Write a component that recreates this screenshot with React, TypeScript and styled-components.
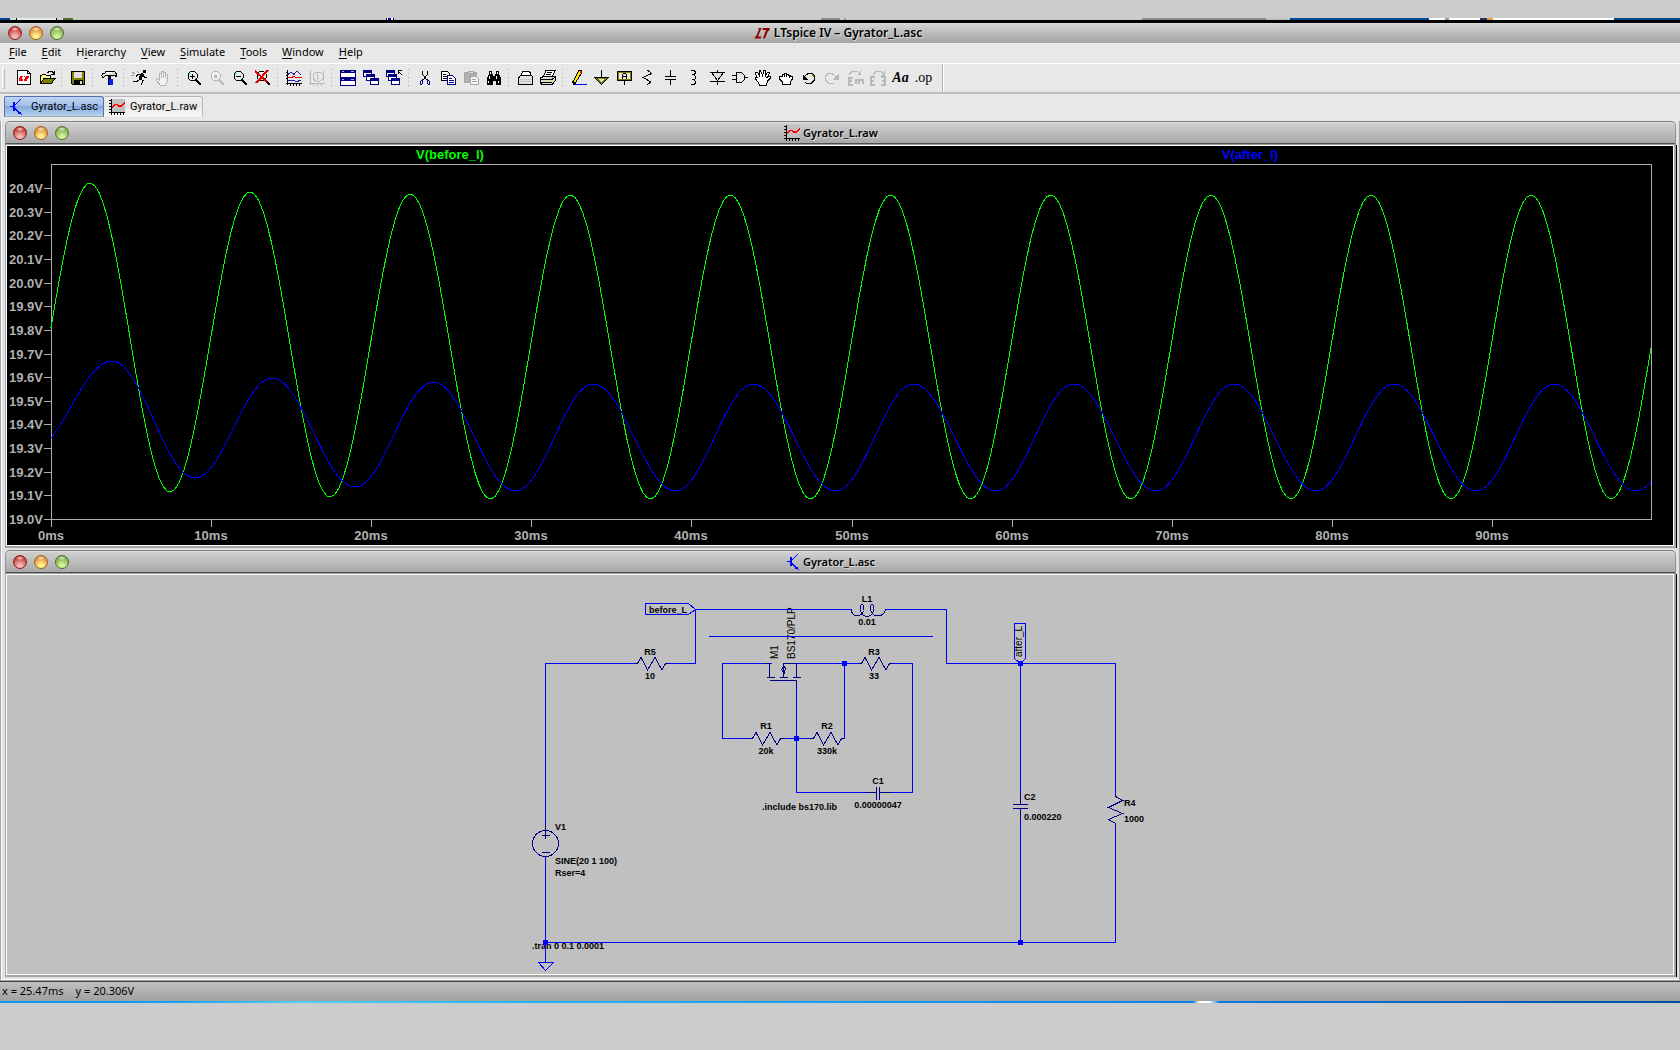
import React from "react";
import styled, { createGlobalStyle } from "styled-components";

const UI = `"Noto Sans", "Open Sans", sans-serif`;
const ARIAL = `"Liberation Sans", Arial, sans-serif`;

const GlobalStyle = createGlobalStyle`
  body { margin: 0; background: #cccccc; font-family: ${UI}; color: #000; }
  *, *::before, *::after { box-sizing: border-box; }
  button { border: 0; padding: 0; margin: 0; background: none; font: inherit; color: inherit; }
`;

/* ---------- shell ---------- */

const Page = styled.div`
  display: flex;
  flex-direction: column;
  padding-top: 18px;
`;

const DesktopEdge = styled.div`
  height: 5px;
  border-bottom: 3px solid #000;
  background: linear-gradient(
    90deg,
    #04429a 0 10px, #d4dce0 10px 16px, #000 16px 17px, #e2eef0 17px 56px, #000 56px 57px, #d4d8d4 57px 63px,
    #4c7030 63px 73px, #c8ccc8 73px 386px, #000 386px 387px, #fff 387px 388px, #0000c0 388px 391px, #fff 391px 393px,
    #000 393px 394px, #c8ccc8 394px 821px, #8c8c8c 821px 840px, #c8ccc8 840px 844px, #9c9c9c 844px 846px,
    #c8ccc8 846px 1142px, #8a8c8a 1142px 1266px, #c0c0c0 1266px 1290px, #044a94 1290px 1429px, #fff 1429px 1445px,
    #999 1445px 1449px, #fff 1449px 1480px, #203870 1480px 1487px, #e8a030 1487px 1493px, #fff 1493px 1614px, #044a84 1614px
  );
`;

const Caption = styled.header<{ $child?: boolean }>`
  display: grid;
  grid-template-columns: 1fr auto 1fr;
  align-items: center;
  height: ${(p) => (p.$child ? 24 : 20)}px;
  padding: ${(p) => (p.$child ? "0 26px 2px 7px" : "0 12px 1px 8px")};
  border-top: 1px solid ${(p) => (p.$child ? "#808080" : "#dcdcdc")};
  border-left: ${(p) => (p.$child ? "1px solid #909090" : "0")};
  border-right: ${(p) => (p.$child ? "1px solid #909090" : "0")};
  border-radius: ${(p) => (p.$child ? "5px 5px 0 0" : "0")};
  background: linear-gradient(#d2d2d2, #a4a4a4);
  box-shadow: ${(p) => (p.$child ? "inset 0 -1px #9c9c9c, inset 0 -2px #505050, inset 0 1px #dedede" : "none")};
`;

const Lights = styled.div`
  display: flex;
  gap: 7px;
`;

const Light = styled.button<{ $rim: string; $mid: string; $glow: string }>`
  width: 14px;
  height: 14px;
  border-radius: 50%;
  border: 1px solid ${(p) => p.$rim};
  background:
    radial-gradient(ellipse 4px 2px at 50% 17%, #ffffffd0, #ffffff00),
    radial-gradient(circle at 50% 85%, ${(p) => p.$glow} 15%, ${(p) => p.$mid} 75%);
`;

const Title = styled.h1<{ $child?: boolean }>`
  display: flex;
  align-items: center;
  gap: ${(p) => (p.$child ? 3 : 4)}px;
  margin: 0;
  font: 600 ${(p) => (p.$child ? 11 : 12)}px/16px ${UI};
  text-shadow: 1px 1px 0 #d8d8d8;
`;

const MenuBar = styled.nav`
  display: flex;
  gap: 15px;
  height: 21px;
  padding: 0 9px 3px;
  background: #e8e8e8;
  border-bottom: 1px solid #fff;
`;

const MenuItem = styled.button`
  font: 11px/16px ${UI};
  u { text-underline-offset: 2px; }
`;

const ToolBar = styled.div`
  display: flex;
  align-items: center;
  height: 30px;
  padding-left: 2px;
  background: #e8e8e8;
  border-bottom: 2px solid #bebebe;
`;

const Grip = styled.span`
  width: 3px;
  height: 21px;
  margin-right: 7px;
  border: 1px solid #bbb;
  border-left-color: #fff;
  border-top-color: #fff;
`;

const Tool = styled.button`
  display: grid;
  place-items: center;
  width: 23px;
  height: 24px;
`;

const Divider = styled.span`
  width: 8px;
  height: 18px;
  background: repeating-linear-gradient(#aaa 0 1px, #e8e8e8 1px 4px) 3px 0 / 1px 18px no-repeat;
`;

const ToolBarEnd = styled.span`
  align-self: stretch;
  width: 8px;
  margin-left: 7px;
  border-left: 1px solid #b4b4b4;
  box-shadow: inset 1px 0 #fff;
`;

const Tabs = styled.div`
  display: flex;
  height: 27px;
  padding: 2px 0 4px 4px;
  background: #e8e8e8;
`;

const Tab = styled.button<{ $active?: boolean }>`
  display: flex;
  align-items: center;
  gap: ${(p) => (p.$active ? 8 : 5)}px;
  height: 21px;
  padding: 0 5px;
  font: 11px/16px Roboto, ${ARIAL};
  border: 1px solid ${(p) => (p.$active ? "#5570b0" : "#b8b8b8")};
  border-left-width: ${(p) => (p.$active ? 1 : 0)}px;
  border-bottom-color: ${(p) => (p.$active ? "#a8a8a8" : "#f4f4f4")};
  border-radius: 2px 3px 0 0;
  background: ${(p) =>
    p.$active ? "linear-gradient(#c0d4f0 0, #a4c0ea 45%, #84a8dc 50%, #b4d4f0 100%)" : "linear-gradient(#f2f2f2 0, #e6e6e6 50%, #fafafa 100%)"};
`;

const Workspace = styled.main`
  display: flex;
  flex-direction: column;
  gap: 2px;
  padding: 0 3px 3px 4px;
  background: #dfe3e8;
  border: solid #a4a4a4;
  border-width: 0 1px 1px 1px;
  box-shadow: inset 1px 0 #fff, inset 0 -1px #fff;
`;

const Child = styled.section`
  display: flex;
  flex-direction: column;
`;

const Canvas = styled.div<{ $bg: string }>`
  padding: 1px;
  background: #fff;
  border: solid #a4a4a4;
  border-width: 0 2px 2px 1px;
  box-shadow: 1px 0 #000;
  svg { display: block; width: 100%; height: auto; background: ${(p) => p.$bg}; }
`;

const StatusBar = styled.footer`
  display: flex;
  gap: 12px;
  height: 20px;
  padding-left: 2px;
  border-top: 1px solid #404040;
  background: linear-gradient(#c0c0c0, #a0a0a0);
  font: 11px/18px ${UI};
`;

const DesktopFoot = styled.div`
  height: 2px;
  background: linear-gradient(90deg, #0c94f0 0, #10a0f4 10%, #50d0f4 18%, #20b8f8 30%, #0c90f0 60%, #0c80e8 71%, #fff 71.4%, #fff 72%, #0c78e0 72.6%, #0050a0 100%);
`;

/* ---------- icons ---------- */

const Glyph = styled.svg`
  display: block;
  flex: none;
  overflow: visible;
`;

type IconProps = { w?: number; children: React.ReactNode };
const Icon = ({ w = 17, children }: IconProps) => (
  <Glyph width={w} height={16} viewBox={`0 0 ${w} 16`} fill="none" stroke="#000" strokeWidth={1} shapeRendering="crispEdges" aria-hidden>
    {children}
  </Glyph>
);

const lens = (stroke = "#000", shine = "#40f0f8") => (
  <>
    <path d="M5.5 1.5h4l2.5 2.5v4l-2.5 2.5h-4L3 8V4z" fill="#eee" stroke={stroke} />
    <path d="M4.5 4.5v-1h1M9.5 8.5h1v-1" stroke={shine} />
    <path d="M11 10l5 5" stroke={stroke} strokeWidth={2} />
  </>
);

const miniWin = (x: number, y: number, k: string) => (
  <g key={k}>
    <rect x={x + 0.5} y={y + 0.5} width={8} height={6} fill="#fff" stroke="#000080" />
    <rect x={x} y={y} width={9} height={3} fill="#000080" stroke="none" />
  </g>
);

const transistor = (
  <g stroke="#0000ff">
    <path d="M0 7.5h4M10.500 .5L5 6M5 9.500l5.500 5.500" />
    <path d="M4 3v9" strokeWidth={2} />
    <path d="M11.500 15.500L7.500 14.500 10 12z" fill="#0000ff" stroke="none" />
  </g>
);

const waveform = (
  <>
    <rect x={3} y={0} width={13} height={13} fill="#c0c0c0" stroke="none" />
    <path d="M2.500 0v16M0 13.500h16M0 1.500h2M0 4.500h2M0 7.500h2M0 10.500h2M5.500 14v2M8.500 14v2M11.500 14v2M14.500 14v2" />
    <path d="M3 8.500l3-3h2l2 1.500h2l4-3.500" stroke="#f00" strokeWidth={1.500} />
  </>
);

const ltLogo = (
  <g fill="#900000" stroke="none" shapeRendering="auto">
    <path d="M4.500 3H7.500L4 11.500h3.500l-1 2H0.500L1.200 11.500H2L4.800 5z" />
    <path d="M9 3h7l-1 3h-1L11 13.500H9L12 5H8.200z" />
  </g>
);

const openHand = (stroke: string, fill: string) => (
  <path d="M6.500 15.500L2.500 10.500V8.500h1l2 2V3.500h1.500V8V1.500h2V7.500V2.500h2V8V4.500h2V12l-2 3.500z" fill={fill} stroke={stroke} />
);

const wideHand = (
  <path d="M5.500 15.500L4 12 1.500 9V7.500h2L1.500 4V2.500h2L6 6.500 5 2V.5h1.500L8.500 5.500 10 .5h1.500V2l-.500 4.500L13.500 2.500h1.500V4L13 7.500l2-1h1.500v1.500L13.500 11l-1 4.500z" fill="#fff" />
);

const fist = <path d="M5.500 14.500V12L2.500 9V6.500H5V4.500h2V3.500h2V4h2V5h2.500V6h1.500v3.500L13 12v2.500zM7.500 5v2M9.500 4.500v2.500M12 5.500v2" fill="#fff" />;

type ToolDef = [string, React.ReactNode] | null;

const tools: ToolDef[] = [
  ["New schematic", <>
    <path d="M2.500 .5h10l3 3v11h-13z" fill="#fff" /><path d="M12.500 .5v3h3" />
    <g fill="#f00" stroke="none"><path d="M5.500 5.500H8L6.500 9H8L7.500 11H3.500z" /><path d="M9 5.500h5.500L14 7.500H13L11.500 10.500H8.500L10 7.500H8.500z" /></g>
    <path d="M9 9l1.500-2.500" stroke="#fff" />
  </>],
  ["Open", <>
    <path d="M2.500 13.500V5.500h1l1-1h3l1 1h4v3" fill="#ffff90" />
    <path d="M2.500 13.500L6 8.500h11L13.500 13.500z" fill="#808000" />
    <path d="M9.500 3V2h1l1-1h2l2.500 2.500M16.500 1v3.500H13" />
  </>],
  null,
  ["Save", <>
    <path d="M2.500 1.500h13v13h-12l-1-1z" fill="#808000" />
    <rect x={5} y={2} width={8} height={6} fill="#e0e0e0" stroke="none" />
    <rect x={5} y={10} width={9} height={4} fill="#000" stroke="none" /><rect x={11} y={11} width={2} height={3} fill="#ddd" stroke="none" />
  </>],
  null,
  ["Control panel", <>
    <path d="M1.500 5.500L3 3.500H4.500l2-2.500h6l2.500 1 1.500 2v2.500L14.500 5.500H6L4 7H2.500z" fill="#e0e0e0" />
    <path d="M6 2.500h6" stroke="#fff" />
    <path d="M8 6h3v9H8z" fill="#000" stroke="none" />
    <path d="M9.500 9v6M11.500 9v6" stroke="#0020ff" strokeWidth={2} />
  </>],
  null,
  ["Run", <>
    <rect x={12} y={0} width={3} height={3} fill="#000" stroke="none" />
    <path d="M12 3.500L8.500 9" strokeWidth={3} />
    <path d="M5 6.500L7 4.500h4l3 3h2M9 8.500l3 2L10 15M9 9L6 11.500H1.500" />
    <path d="M1 2l3 2M0 5l3 1M6 1l2 2" stroke="#999" />
  </>],
  ["Halt", <>{openHand("#b4b4b4", "#f2f2f2")}</>],
  null,
  ["Zoom in", <>{lens()}<path d="M5 6h5M7.500 3.500v5" /></>],
  ["Pan", <>{lens("#b8b8b8", "#ffffff")}<path d="M6 6h3" stroke="#b8b8b8" strokeWidth={3} /></>],
  ["Zoom out", <>{lens()}<path d="M5 6h5" /></>],
  ["Zoom to fit", <>{lens()}<path d="M1 1l12 11M14 0L2 13" stroke="#e00000" strokeWidth={2} /></>],
  null,
  ["Autorange", <>
    <path d="M2.500 0v15M1 13.500h16M1 2.500h1M1 5.500h1M1 8.500h1M5.500 14v2M8.500 14v2M11.500 14v2M14.500 14v2" />
    <path d="M3 4.500L6 2l3 2.500L12 1l4 4M3 10.500h6l2 1 5-1" stroke="#2020a0" /><path d="M3 7.500h3l3-1 3 1.500 5-1" stroke="#f00" />
  </>],
  ["Pick traces", <g stroke="#b8b8b8"><path d="M2.500 0v15M1 13.500h16M1 3.500h1M1 7.500h1M5.500 14v2M9.500 14v2M13.500 14v2" /><path d="M5 9V5l3-3h4l3 3v3l-3 3H8zM9.500 4v6M15.500 1v10" /></g>],
  null,
  ["Tile", <>{[0, 8].map((y) => <g key={y}><rect x={1.500} y={y + 0.500} width={15} height={7} fill="#fff" stroke="#000080" /><rect x={1} y={y} width={16} height={3} fill="#000080" stroke="none" /><path d="M3 1.500h2M12 1.500h3" transform={`translate(0 ${y})`} stroke="#b0b0e0" /></g>)}</>],
  ["Cascade", <>{miniWin(1, 0, "a")}{miniWin(4, 4, "b")}{miniWin(8, 8, "c")}</>],
  ["Close all", <>{miniWin(1, 0, "a")}{miniWin(3, 4, "b")}{miniWin(6, 8, "c")}<path d="M17 5l-4-4M13.500 4V.5H17" /></>],
  null,
  ["Cut", <><path d="M6.500 1v3l4 6M11.500 1v3l-4 6" /><path d="M4.500 11.500l2-1.500v3.500l-1 1h-1zM11.500 10l2 1.500v3h-1l-1-1z" stroke="#000080" /></>],
  ["Copy", <>
    <path d="M2.500 1.500h6l2 2v7h-8z" fill="#fff" /><path d="M4 4.500h3M4 6.500h4M4 8.500h4" />
    <path d="M8.500 5.500h5l3 3v6h-8z" fill="#fff" stroke="#000080" /><path d="M10 8.500h3M10 10.500h5M10 12.500h5" stroke="#000080" />
  </>],
  ["Paste", <><path d="M2.500 2.500h12v10h-12z" fill="#b0b0b0" stroke="#a8a8a8" /><path d="M6 1.500h5v2H6z" fill="#ddd" stroke="#a8a8a8" /><path d="M8.500 6.500h6l2 2v6h-8z" fill="#f4f4f4" stroke="#a8a8a8" /><path d="M10 9.500h4M10 11.500h5" stroke="#a8a8a8" /></>],
  ["Find", <>
    <path d="M4 1h3v3h1v2h2V4h1V1h3v3l2 4v7h-5v-4H8v4H2V8l2-4z" fill="#000" stroke="none" />
    <path d="M5.500 2v2M12.500 2v2M4.500 6v3M11.500 6v3M3.500 11v2M13.500 11v2" stroke="#fff" />
  </>],
  null,
  ["Print preview", <><path d="M4.500 6L7 1.500h6l1.500 1.500V6" fill="#fff" /><path d="M2.500 8L4.500 5.500h11l1 1.500v7.500h-14z" fill="#e0e0e0" /><path d="M4 9.500h11M4 11.500h11" stroke="#aaa" strokeDasharray="1 1" /></>],
  ["Print", <><path d="M4.500 6L7 .5h9L13.500 6" fill="#fff" /><path d="M8 2.500h5M7 4.500h5" /><path d="M1.500 8L4.500 6.500h12v4L13 14.500H3.500l-2-1z" fill="#d8d8d8" /><path d="M1.500 9.500H13L16 7M2 12.500h11" /><path d="M8 11h4" stroke="#f0e000" /></>],
  null,
  ["Wire", <><path d="M3.500 13.500L4 10 9 .5h2.500V3L6 12z" fill="#ffe800" /><path d="M9 2l2-2 1.500 2-1.500 2z" fill="#e00000" stroke="none" /><path d="M3 14h3M3 11l1 3" strokeWidth={2} /><path d="M5 14.500h12" stroke="#0000ff" /></>],
  ["Ground", <><path d="M8.500 0v8M1 7.500h15M2 8l6.500 6.500L15 8" /><path d="M4 8.500h9l-4.500 4.500z" stroke="#808000" fill="#e8e8e8" /></>],
  ["Label net", <><path d="M1.500 1.500h14v9h-14zM8.500 11v4" /><path d="M2.500 2.500h12v7h-12z" stroke="#808000" /><path d="M6.500 9V4.500L7.500 3.500h2l1 1V9M7 6.500h3" /></>],
  ["Resistor", <path d="M8.500 0l4 3.500-8.500 4 8 4.500-4 3" />],
  ["Capacitor", <path d="M8.500 0v6M3 6.500h11M3 9.500h11M8.500 10v5" />],
  ["Inductor", <path d="M6 .5h3l1.500 1.500v1L9 4.500H7M9 5.500l1.500 1v2L9 9.500H7M9 10.500l1.500 1v1.500L9 14.500H6" />],
  ["Diode", <><path d="M9.500 0v15M2 2.500h15M2 11.500h15" /><path d="M3.500 2.500h12L9.500 10.500z" fill="#e0e0e0" /></>],
  ["Component", <><path d="M5.500 2.500h5l3 3v4l-3 3h-5zM1 5.500h4M1 9.500h4M14 7.500h3" /></>],
  ["Move", wideHand],
  ["Drag", fist],
  ["Undo", <><path d="M5 12.500h1M6 13.500h5l3.500-3.500V6L12 3.500H8L4 7" /><path d="M2.500 4v5.500H8z" fill="#000" stroke="none" /><path d="M12 4l2 3" stroke="#808000" /></>],
  ["Redo", <g stroke="#b8b8b8"><path d="M11 13.500H6L2.500 10V6L5 3.500h4L13.500 7" /><path d="M15.500 4v5.500H10z" fill="#b8b8b8" stroke="none" /></g>],
  ["Rotate", <g stroke="#b8b8b8"><path d="M3 4.500L6 1.500h5l3 2M14.500 1v3.500h-3" /><path d="M2 7.500h5M2.500 8v7M2 11h4M2 14.500h5M9 9.500h8M9.500 9v5M13 10v4M16.500 9v5" strokeWidth={2} /></g>],
  ["Mirror", <g stroke="#b8b8b8"><path d="M4 4.500L7 1.500h5l3 3M15.500 1v4h-4" /><path d="M1 6.500h5M2 7v8M1 10.500h4M1 14.500h5M12 6.500h5M16 7v8M13 10.500h4M12 14.500h5" strokeWidth={2} /></g>],
];

const TextTool = styled.span<{ $italic?: boolean }>`
  font: ${(p) => (p.$italic ? "italic bold" : "normal")} 14px/16px "Liberation Serif", "Times New Roman", serif;
`;

/* ---------- waveform plot ---------- */

type Pt = [number, number];

const PERIOD = 160.12;

// Successive turning points of a trace; consecutive ones are joined by half a cosine.
const extremes = (xPeak: number, peaks: number[], xTrough: number, troughs: number[]): Pt[] => {
  const out: Pt[] = [];
  for (let k = 0; k < 11; k++) {
    out.push([xPeak + PERIOD * k, peaks[Math.min(k, peaks.length - 1)]]);
    out.push([xTrough + PERIOD * k, troughs[Math.min(k, troughs.length - 1)]]);
  }
  return out;
};

const trace = (turns: Pt[], from: number, to: number) => {
  const pts: string[] = [];
  for (let x = from; x <= to; x += 4) {
    const i = Math.max(0, turns.findIndex((t) => t[0] > x) - 1);
    const [x0, y0] = turns[i];
    const [x1, y1] = turns[i + 1];
    const y = y0 + ((y1 - y0) * (1 - Math.cos((Math.PI * (x - x0)) / (x1 - x0)))) / 2;
    pts.push(`${x},${Math.round(y * 10) / 10}`);
  }
  return pts.join(" ");
};

const greenTurns: Pt[] = [[3, 338], ...extremes(83, [37, 46, 48, 49], 163, [346, 351, 353])];
const blueTurns: Pt[] = [[23, 306], ...extremes(105, [215, 232, 236, 238], 188, [332, 341, 345])];
// The blue trace settles slightly later in the period once the start-up transient has died out.
blueTurns.forEach((t, i) => { if (i >= 5 && i % 2) t[0] += 1; });

const volts = ["20.4", "20.3", "20.2", "20.1", "20.0", "19.9", "19.8", "19.7", "19.6", "19.5", "19.4", "19.3", "19.2", "19.1", "19.0"];
const times = Array.from({ length: 10 }, (_, i) => ({ ms: i * 10, x: 44 + Math.round(PERIOD * i) }));

const PlotText = styled.text<{ $fill?: string; $anchor?: string }>`
  font: bold 13px ${ARIAL};
  fill: ${(p) => p.$fill ?? "#b0b0b0"};
  text-anchor: ${(p) => p.$anchor ?? "middle"};
`;

const Plot = () => (
  <svg viewBox="0 0 1666 399" role="img" aria-label="Transient voltages against time">
    <g fill="none" stroke="#b0b0b0" shapeRendering="crispEdges">
      <rect x={44.5} y={18.5} width={1600} height={355} />
      {volts.map((v, i) => <path key={v} d={`M37 ${Math.round(42 + (i * 331) / 14) + 0.5}h7`} />)}
      {times.map((t) => <path key={t.ms} d={`M${t.x + 0.5} 374v7`} />)}
      <polyline points={trace(greenTurns, 44, 1644)} stroke="#00ff00" />
      <polyline points={trace(blueTurns, 44, 1644)} stroke="#0000ff" />
    </g>
    <PlotText x={443} y={13} $fill="#00ff00">V(before_l)</PlotText>
    <PlotText x={1243} y={13} $fill="#0000ff">V(after_l)</PlotText>
    {volts.map((v, i) => <PlotText key={v} x={36} y={Math.round(47 + (i * 331) / 14)} $anchor="end">{v}V</PlotText>)}
    {times.map((t) => <PlotText key={t.ms} x={t.x} y={394}>{t.ms}ms</PlotText>)}
  </svg>
);

/* ---------- schematic ---------- */

const Note = styled.text<{ $mid?: boolean; $turned?: boolean }>`
  font: ${(p) => (p.$turned ? "10px" : "bold 9px")} ${ARIAL};
  fill: #000;
  text-anchor: ${(p) => (p.$mid ? "middle" : "start")};
`;

const RES = "M0 0H4L7.500-6 14 6.500 21.500-6 28.500 6.500 32 0H35";

const notes: [number, number, string, boolean?][] = [
  [643, 80, "R5", true], [643, 104, "10", true],
  [860, 27, "L1", true], [860, 50, "0.01", true],
  [867, 80, "R3", true], [867, 104, "33", true],
  [759, 154, "R1", true], [759, 179, "20k", true],
  [820, 154, "R2", true], [820, 179, "330k", true],
  [871, 209, "C1", true], [871, 233, "0.00000047", true],
  [755, 235, ".include bs170.lib"],
  [548, 255, "V1"], [548, 289, "SINE(20 1 100)"], [548, 301, "Rser=4"],
  [525, 374, ".tran 0 0.1 0.0001"],
  [1017, 225, "C2"], [1017, 245, "0.000220"],
  [1117, 231, "R4"], [1117, 247, "1000"],
  [642, 38, "before_L"],
];

const Schematic = () => (
  <svg viewBox="0 0 1666 399" role="img" aria-label="Gyrator schematic">
    {notes.map(([x, y, t, mid]) => <Note key={t} x={x} y={y} $mid={mid}>{t}</Note>)}
    <Note $turned transform="translate(771 84) rotate(-90)">M1</Note>
    <Note $turned transform="translate(788 84) rotate(-90)">BS170/PLP</Note>
    <Note $turned transform="translate(1015 82) rotate(-90)">after_L</Note>
    <g transform="translate(.5 .5)" fill="none" stroke="#0000ff" shapeRendering="crispEdges">
      <path d="M538 248V88H628M659 88H688V34M688 34H844M878 34H939V88H1108V218M1108 250V367H538M538 281V387" />
      <path d="M701 61H925M764 88H715V163H744M774 163H803M837 163V88H789M789 108V217H858M884 217H905V88H884M837 88H853M1013 88V219M1013 243V367" />
      <path d="M638 28H681L688 34 681 39H638zM1007 48H1018V83L1013 88 1007 83zM531 387H546L538 395z" />
      <g stroke="#000080">
        <path d={RES} transform="translate(626 88)" />
        <path d={RES} transform="translate(850 88)" />
        <path d={RES} transform="translate(741 163)" />
        <path d={RES} transform="translate(802 163)" />
        <path d="M1108 218V221L1115 225 1101 232 1115 238 1101 244 1108 248V251" />
        <path d="M1013 218V229M1005 229H1020M1005 233H1020M1013 233V244" />
        <path d="M858 217H869M869 211V224M872 211V224M872 217H884" />
        <path d="M844 34C844 42 854 42 856 35 857 27 852 27 853 34 854 43 864 43 866 35 867 27 862 27 863 34 864 42 876 43 878 34" />
        <circle cx={538} cy={268} r={13} />
        <path d="M538 248V263M534 260H542M534 277H542" />
        <path d="M756 88H762V102M759 102H767M762 105H789V109M772 102H780M776 102V88H790M785 102H793M789 88V102M776 91L774 94 777 98 778 92z" />
      </g>
    </g>
    <g fill="#0000ff">
      {[[837, 88], [789, 163], [1013, 88], [1013, 367], [538, 367]].map(([x, y]) => <rect key={`${x}-${y}`} x={x - 2} y={y - 2} width={5} height={5} />)}
    </g>
  </svg>
);

/* ---------- composition ---------- */

const WindowLights = () => (
  <Lights>
    <Light aria-label="Close" $rim="#842020" $mid="#c43830" $glow="#f4b8b4" />
    <Light aria-label="Minimize" $rim="#a06018" $mid="#e08c38" $glow="#fff090" />
    <Light aria-label="Zoom" $rim="#4c7028" $mid="#7cac4c" $glow="#d4f098" />
  </Lights>
);

const menus: [string, string, string][] = [
  ["", "F", "ile"], ["", "E", "dit"], ["H", "i", "erarchy"], ["", "V", "iew"],
  ["", "S", "imulate"], ["", "T", "ools"], ["", "W", "indow"], ["", "H", "elp"],
];

export default function App() {
  return (
    <Page>
      <GlobalStyle />
      <DesktopEdge />
      <Caption>
        <WindowLights />
        <Title><Icon w={16}>{ltLogo}</Icon>LTspice IV – Gyrator_L.asc</Title>
      </Caption>
      <MenuBar>
        {menus.map(([a, k, b]) => <MenuItem key={a + k + b}>{a}<u>{k}</u>{b}</MenuItem>)}
      </MenuBar>
      <ToolBar role="toolbar" aria-label="Main toolbar">
        <Grip />
        {tools.map((t, i) => t ? <Tool key={t[0]} aria-label={t[0]}><Icon>{t[1]}</Icon></Tool> : <Divider key={i} />)}
        <Tool><TextTool $italic>Aa</TextTool></Tool>
        <Tool><TextTool>.op</TextTool></Tool>
        <ToolBarEnd />
      </ToolBar>
      <Tabs>
        <Tab $active><Icon w={13}>{transistor}</Icon>Gyrator_L.asc</Tab>
        <Tab><Icon w={16}>{waveform}</Icon>Gyrator_L.raw</Tab>
      </Tabs>
      <Workspace>
        <Child>
          <Caption $child>
            <WindowLights />
            <Title as="h2" $child><Icon w={16}>{waveform}</Icon>Gyrator_L.raw</Title>
          </Caption>
          <Canvas $bg="#000"><Plot /></Canvas>
        </Child>
        <Child>
          <Caption $child>
            <WindowLights />
            <Title as="h2" $child><Icon w={13}>{transistor}</Icon>Gyrator_L.asc</Title>
          </Caption>
          <Canvas $bg="#c0c0c0"><Schematic /></Canvas>
        </Child>
      </Workspace>
      <StatusBar><span>x = 25.47ms</span><span>y = 20.306V</span></StatusBar>
      <DesktopFoot />
    </Page>
  );
}
